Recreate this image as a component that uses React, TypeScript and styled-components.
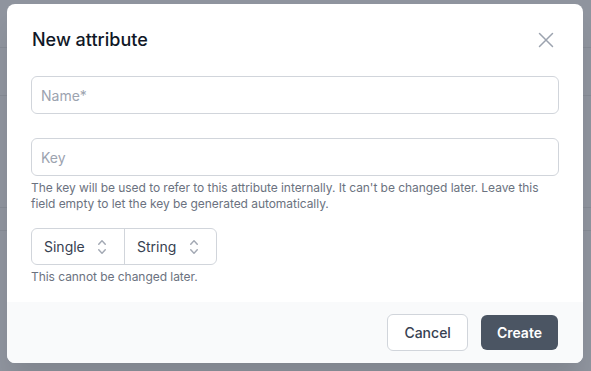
import React from "react";
import styled, { createGlobalStyle } from "styled-components";

const GlobalStyle = createGlobalStyle`
  html, body {
    margin: 0;
    padding: 0;
    width: 591px;
    height: 371px;
    overflow: hidden;
    background: #8f949e;
    font-family: Inter, "Noto Sans", "Liberation Sans", sans-serif;
    -webkit-font-smoothing: antialiased;
  }
  * {
    box-sizing: border-box;
  }
`;

// faint rows of the page behind the overlay
const Backdrop = styled.div`
  width: 591px;
  height: 371px;
  padding: 4px 8px 8px 7px;
  background-color: #8f949e;
  background-image: linear-gradient(#868b95, #868b95),
    linear-gradient(#868b95, #868b95), linear-gradient(#868b95, #868b95),
    linear-gradient(#868b95, #868b95);
  background-repeat: no-repeat;
  background-size: 100% 1px;
  background-position: 0 47px, 0 95px, 0 207px, 0 230px;
`;

const Dialog = styled.div`
  width: 576px;
  height: 359px;
  background: #ffffff;
  border-radius: 8px;
  overflow: hidden;
  display: flex;
  flex-direction: column;
  box-shadow: 0 20px 25px -5px rgba(0, 0, 0, 0.1);
`;

const Body = styled.div`
  flex: 1;
  padding: 22px 24px 16px 24px;
  display: flex;
  flex-direction: column;
`;

const Header = styled.div`
  display: flex;
  align-items: center;
  justify-content: space-between;
  height: 28px;
  margin-bottom: 22px;
`;

const Title = styled.h3`
  margin: 0;
  padding-left: 1px;
  font-size: 18px;
  line-height: 28px;
  font-weight: 500;
  color: #111827;
`;

const CloseButton = styled.button`
  border: 0;
  background: none;
  padding: 0;
  margin-right: 1px;
  width: 24px;
  height: 24px;
  display: flex;
  align-items: center;
  justify-content: center;
  color: #9ca3af;
  cursor: pointer;
`;

const Field = styled.div<{ gap?: number }>`
  margin-bottom: ${(p) => p.gap ?? 0}px;
`;

const TextInput = styled.input`
  display: block;
  width: 100%;
  height: 38px;
  border: 1px solid #d1d5db;
  border-radius: 6px;
  padding: 0 9px;
  font-family: inherit;
  font-size: 14px;
  color: #111827;
  background: #fff;
  outline: none;

  &::placeholder {
    color: #9ca3af;
  }
`;

const Help = styled.p`
  margin: 4px 0 0;
  font-size: 12px;
  line-height: 16px;
  letter-spacing: -0.05px;
  color: #6b7280;
`;

const SelectGroup = styled.div`
  display: inline-flex;
  border: 1px solid #d1d5db;
  border-radius: 6px;
  height: 37px;
  overflow: hidden;
  align-self: flex-start;
`;

const SelectBox = styled.div<{ width: number; divider?: boolean }>`
  width: ${(p) => p.width}px;
  display: flex;
  align-items: center;
  justify-content: space-between;
  padding: 0 12px;
  font-size: 14px;
  color: #374151;
  border-left: ${(p) => (p.divider ? "1px solid #d1d5db" : "none")};
`;

const Footer = styled.div`
  height: 61px;
  background: #f9fafb;
  display: flex;
  align-items: center;
  justify-content: flex-end;
  gap: 13px;
  padding: 0 25px 0 24px;
`;

const Button = styled.button<{ primary?: boolean }>`
  height: ${(p) => (p.primary ? 35 : 37)}px;
  padding: 0 16px;
  border-radius: 6px;
  font-family: inherit;
  font-size: 14px;
  font-weight: ${(p) => (p.primary ? 600 : 500)};
  color: ${(p) => (p.primary ? "#ffffff" : "#374151")};
  background: ${(p) => (p.primary ? "#4b5563" : "#ffffff")};
  border: ${(p) => (p.primary ? "none" : "1px solid #d1d5db")};
  cursor: pointer;
`;

const CloseIcon = () => (
  <svg width="16" height="16" viewBox="0 0 16 16" fill="none">
    <path
      d="M1.5 1.5l13 13M14.5 1.5l-13 13"
      stroke="currentColor"
      strokeWidth="1.5"
      strokeLinecap="round"
    />
  </svg>
);

const UpDownIcon = () => (
  <svg width="20" height="20" viewBox="0 0 20 20" fill="#a3a9b4">
    <path d="M10 3a.75.75 0 01.55.24l3.25 3.5a.75.75 0 11-1.1 1.02L10 4.852 7.3 7.76a.75.75 0 01-1.1-1.02l3.25-3.5A.75.75 0 0110 3zm-3.76 9.2a.75.75 0 011.06.04l2.7 2.908 2.7-2.908a.75.75 0 111.1 1.02l-3.25 3.5a.75.75 0 01-1.1 0l-3.25-3.5a.75.75 0 01.04-1.06z" />
  </svg>
);

export default function App() {
  return (
    <>
      <GlobalStyle />
      <Backdrop>
        <Dialog>
          <Body>
            <Header>
              <Title>New attribute</Title>
              <CloseButton aria-label="Close">
                <CloseIcon />
              </CloseButton>
            </Header>

            <Field gap={24}>
              <TextInput placeholder="Name*" />
            </Field>

            <Field gap={16}>
              <TextInput placeholder="Key" />
              <Help>
                The key will be used to refer to this attribute internally. It
                can't be changed later. Leave this field empty to let the key be
                generated automatically.
              </Help>
            </Field>

            <SelectGroup>
              <SelectBox width={92}>
                Single
                <UpDownIcon />
              </SelectBox>
              <SelectBox width={92} divider>
                String
                <UpDownIcon />
              </SelectBox>
            </SelectGroup>
            <Help>This cannot be changed later.</Help>
          </Body>

          <Footer>
            <Button>Cancel</Button>
            <Button primary>Create</Button>
          </Footer>
        </Dialog>
      </Backdrop>
    </>
  );
}
